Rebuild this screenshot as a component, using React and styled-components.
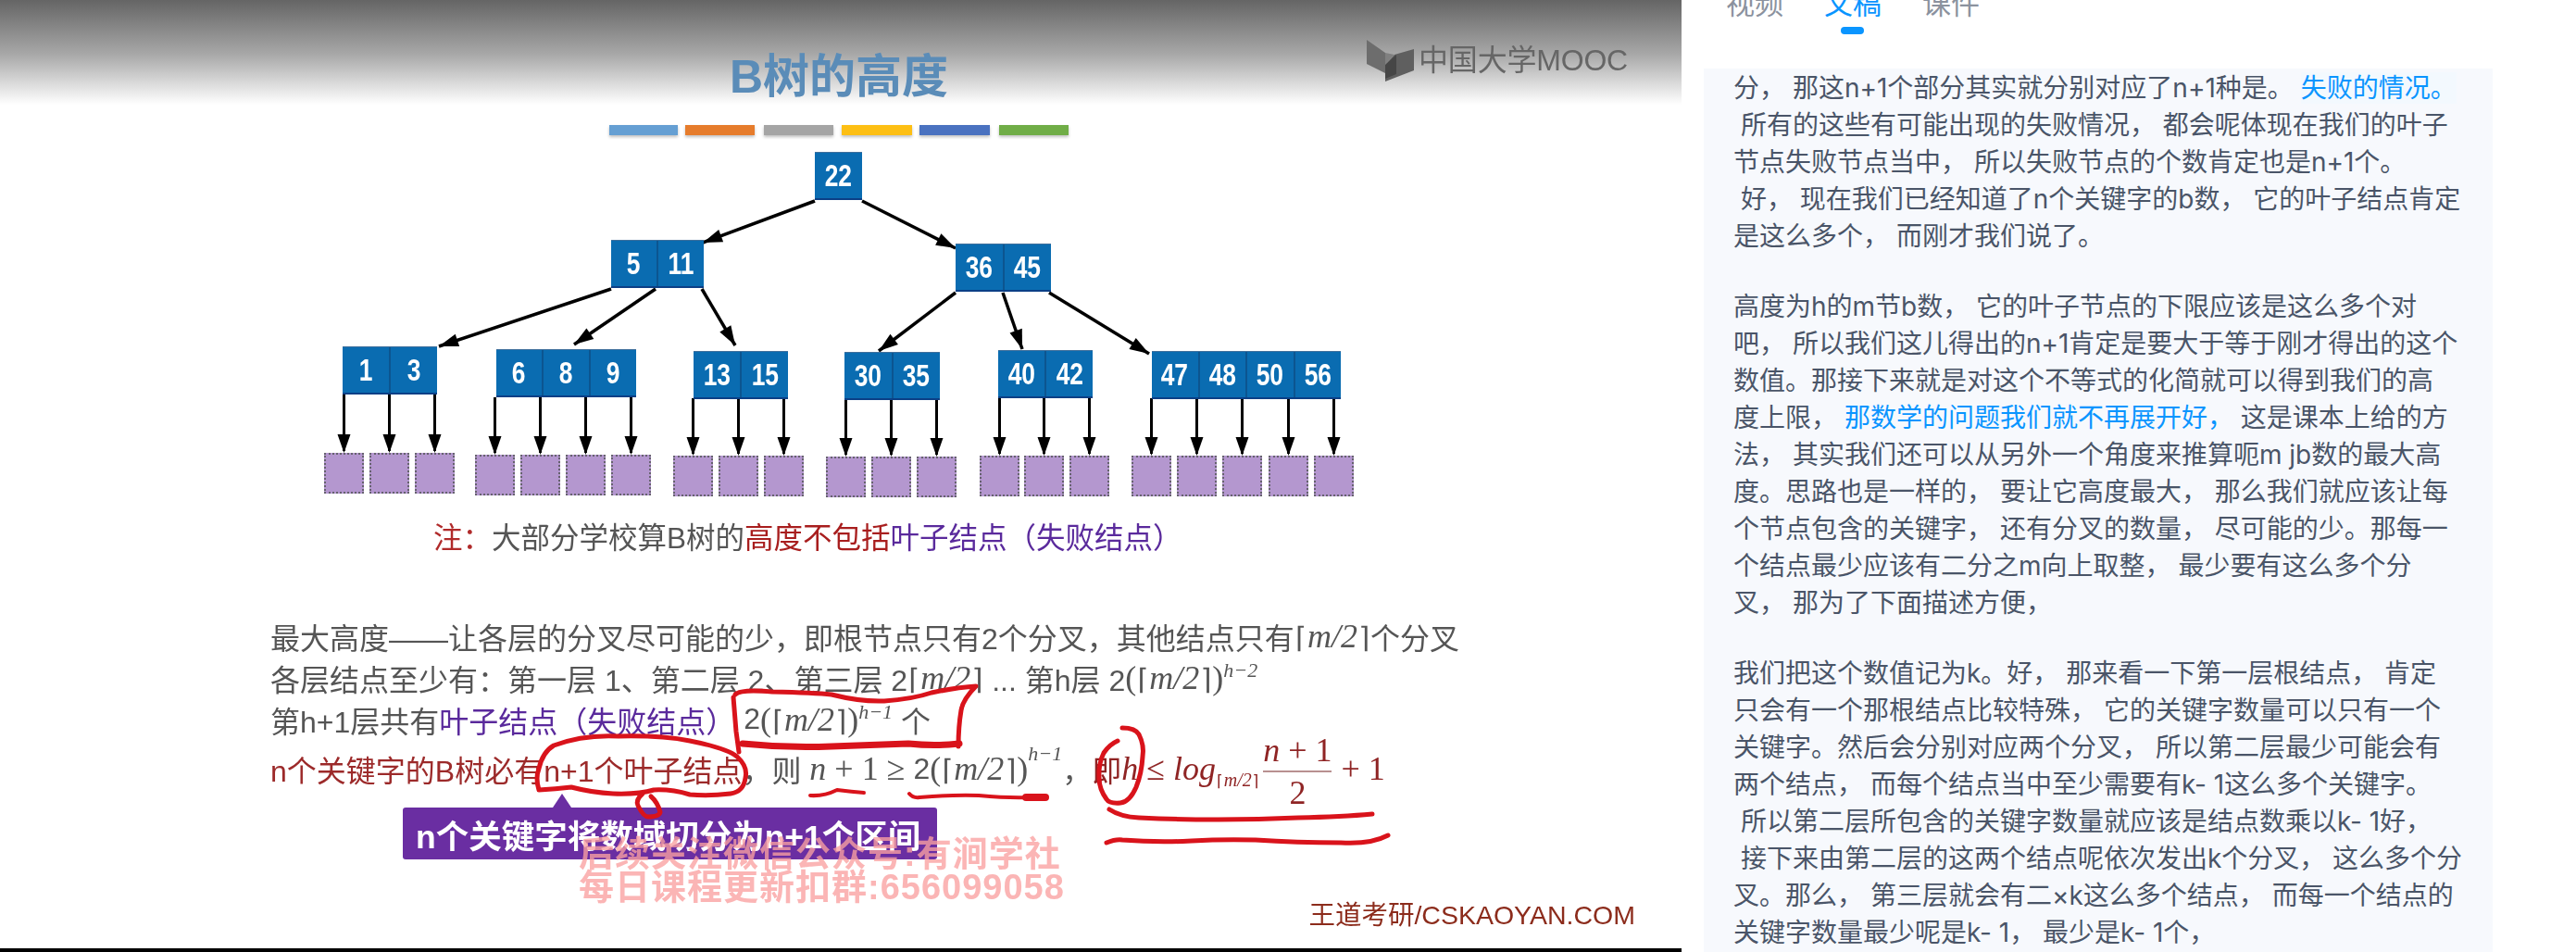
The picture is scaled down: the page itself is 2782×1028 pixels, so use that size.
import React from 'react';
import styled, { createGlobalStyle } from 'styled-components';

const GlobalStyle = createGlobalStyle`
  html, body { margin: 0; padding: 0; background: #fff; }
`;

const SLIDE_FONT = `"Liberation Sans", "Noto Sans CJK SC", sans-serif`;
const MATH_FONT = `"Liberation Serif", "DejaVu Serif", serif`;

const Page = styled.div`
  width: 2782px;
  height: 1028px;
  display: flex;
  overflow: hidden;
  background: #fff;
`;

const Slide = styled.div`
  position: relative;
  width: 1816px;
  height: 1028px;
  flex: none;
  display: flex;
  flex-direction: column;
  overflow: hidden;
  font-family: ${SLIDE_FONT};
  background: #fff;
  filter: blur(0.5px);
`;

const SlideHeader = styled.div`
  height: 113px;
  flex: none;
  box-sizing: border-box;
  padding-top: 52px;
  display: grid;
  grid-template-columns: 1fr auto 1fr;
  background: linear-gradient(#656565, #a8a8a8 52%, #fff);
`;

const Title = styled.h1`
  margin: 0;
  grid-column: 2;
  font-size: 50px;
  line-height: 62px;
  font-weight: 700;
  color: #5a8cb8;
  transform: translateX(-2px);
`;

const Logo = styled.div`
  justify-self: end;
  margin: -9px 58px 0 0;
  height: 46px;
  display: flex;
  align-items: flex-start;
  gap: 4px;
`;

const LogoText = styled.span`
  font-size: 32px;
  line-height: 32px;
  margin-top: 6px;
  color: #666;
  letter-spacing: -0.2px;
`;

const ColorBars = styled.div`
  display: flex;
  margin: 22px 0 0 658px;
  height: 11px;
`;

const ColorBar = styled.div`
  width: ${p => p.$w}px;
  margin-right: ${p => p.$gap}px;
  background: ${p => p.$c};
  box-shadow: 0 2px 3px rgba(0, 0, 0, 0.25);
`;

const Diagram = styled.div`
  position: relative;
  height: 404px;
  flex: none;
  margin-top: 4px;
`;

const ArrowLayer = styled.svg`
  position: absolute;
  left: 0;
  top: 0;
`;

const TreeNode = styled.div`
  position: absolute;
  left: ${p => p.$x}px;
  top: ${p => p.$y}px;
  height: 52px;
  display: flex;
  background: #0a6cb1;
  border-top: 1px solid #3f6f9c;
  border-bottom: 2px solid #0b3f86;
  box-sizing: border-box;
`;

const Cell = styled.div`
  width: ${p => p.$w}px;
  display: flex;
  align-items: center;
  justify-content: center;
  color: #fff;
  & + & { border-left: 2px solid #0c5590; }
`;

const CellLabel = styled.span`
  font-size: 33px;
  font-weight: 700;
  transform: scaleX(0.8);
`;

const Leaf = styled.div`
  position: absolute;
  left: ${p => p.$x}px;
  top: ${p => p.$y}px;
  width: 43px;
  height: 44px;
  box-sizing: border-box;
  background: #b497cf;
  border: 2px dotted #66626e;
`;

const Note = styled.div`
  margin: 4px 0 0 468px;
  font-size: 31.5px;
  line-height: 46px;
  color: #555;
  white-space: nowrap;
`;

const TextBlock = styled.div`
  margin: 60px 0 0 292px;
  font-size: 32px;
  color: #555;
`;

const TextLine = styled.div`
  height: ${p => p.$h || 45}px;
  display: flex;
  align-items: center;
  white-space: pre;
`;

const Mark = styled.span`
  color: ${p => p.$c};
`;

const MathText = styled.span`
  font-family: ${MATH_FONT};
  font-size: 36px;
  color: ${p => p.$c || '#555'};
  font-style: ${p => (p.$plain ? 'normal' : 'italic')};
`;

const CeilBracket = styled.span`
  font-family: "DejaVu Sans", serif;
  font-style: normal;
  font-size: 0.86em;
  margin: 0 1px;
`;

const Paren = styled.span`
  font-style: normal;
`;

const Sup = styled.span`
  font-family: ${MATH_FONT};
  font-size: 22px;
  font-style: italic;
  align-self: flex-start;
  line-height: 30px;
`;

const Sub = styled.span`
  font-family: ${MATH_FONT};
  font-size: 20px;
  font-style: italic;
  color: #8f2424;
  transform: translateY(12px);
`;

const Fraction = styled.span`
  display: inline-flex;
  flex-direction: column;
  align-items: center;
  width: 74px;
  margin: 0 10px 0 4px;
  font-family: ${MATH_FONT};
  font-size: 36px;
  line-height: 44px;
  color: #8f2424;
  transform: translateY(3px);
`;

const FractionBottom = styled.span`
  align-self: stretch;
  text-align: center;
  border-top: 2px solid #b89090;
`;

const Callout = styled.div`
  position: relative;
  width: 577px;
  height: 56px;
  margin: 11px 0 0 435px;
  box-sizing: border-box;
  padding-left: 14px;
  display: flex;
  align-items: center;
  border-radius: 3px;
  background: #6a2ea2;
  color: #fff;
  font-size: 35.5px;
  font-weight: 700;
  white-space: nowrap;
  &::before {
    content: '';
    position: absolute;
    left: 162px;
    top: -15px;
    border-left: 10px solid transparent;
    border-right: 10px solid transparent;
    border-bottom: 15px solid #6a2ea2;
  }
`;

const Watermark = styled.div`
  position: absolute;
  left: 625px;
  top: 904px;
  color: rgba(250, 160, 160, 0.78);
  font-size: 38px;
  line-height: 36px;
  font-weight: 700;
  letter-spacing: 1px;
  white-space: nowrap;
`;

const Credit = styled.div`
  margin: auto 50px 19px auto;
  font-size: 28.5px;
  line-height: 34px;
  color: #8c2c1c;
  white-space: nowrap;
`;

const BlackBar = styled.div`
  height: 4px;
  flex: none;
  background: #000;
`;

const InkLayer = styled.svg`
  position: absolute;
  left: 0;
  top: 0;
  pointer-events: none;
`;

const Side = styled.div`
  flex: 1;
  min-width: 0;
  font-family: Inter, "Noto Sans CJK SC", sans-serif;
`;

const Tabs = styled.div`
  position: relative;
  height: 74px;
  overflow: hidden;
  display: flex;
  gap: 44px;
  padding-left: 48px;
`;

const Tab = styled.div`
  margin-top: -16px;
  height: 46px;
  font-size: 31px;
  line-height: 40px;
  color: ${p => (p.$active ? '#0a95ff' : '#8b929e')};
`;

const TabMark = styled.div`
  position: absolute;
  left: 172px;
  top: 29px;
  width: 25px;
  height: 8px;
  border-radius: 4px;
  background: #0a95ff;
`;

const Panel = styled.div`
  margin-left: 24px;
  width: 852px;
  height: 954px;
  box-sizing: border-box;
  padding: 1px 0 0 32px;
  overflow: hidden;
  background: #f7f9fd;
  font-size: 28px;
  color: #4a5568;
`;

const Paragraph = styled.p`
  margin: 0 0 36px;
`;

const Line = styled.div`
  height: 40px;
  line-height: 40px;
  white-space: pre;
`;

const Highlight = styled.span`
  color: #0a95ff;
  background: ${p => (p.$bg ? '#f3f9fe' : 'transparent')};
`;

const bars = [
  { w: 74, gap: 8, c: '#659fd3' },
  { w: 75, gap: 10, c: '#e67c2c' },
  { w: 75, gap: 9, c: '#a5a5a5' },
  { w: 76, gap: 8, c: '#fdbf14' },
  { w: 76, gap: 10, c: '#4a72c0' },
  { w: 75, gap: 0, c: '#70ad47' },
];

const nodes = [
  { x: 880, y: 164, keys: ['22'], w: 51 },
  { x: 660, y: 259, keys: ['5', '11'], w: 49 },
  { x: 1032, y: 263, keys: ['36', '45'], w: 50.5 },
  { x: 370, y: 374, keys: ['1', '3'], w: 50 },
  { x: 536, y: 377, keys: ['6', '8', '9'], w: 49 },
  { x: 749, y: 379, keys: ['13', '15'], w: 50 },
  { x: 912, y: 380, keys: ['30', '35'], w: 50.5 },
  { x: 1078, y: 378, keys: ['40', '42'], w: 50 },
  { x: 1244, y: 379, keys: ['47', '48', '50', '56'], w: 49.5 },
];

const leafGroups = [
  { y: 489, xs: [350, 399, 448] },
  { y: 491, xs: [513, 562, 611, 660] },
  { y: 492, xs: [727, 776, 825] },
  { y: 493, xs: [892, 941, 990] },
  { y: 492, xs: [1058, 1106, 1155] },
  { y: 492, xs: [1222, 1271, 1320, 1370, 1419] },
];

const nodeBottoms = [426, 429, 430, 432, 429, 430];

const treeArrows = [
  [880, 217, 759, 262],
  [931, 217, 1032, 268],
  [660, 312, 474, 374],
  [708, 312, 620, 372],
  [758, 312, 794, 373],
  [1032, 316, 949, 379],
  [1083, 316, 1104, 377],
  [1133, 316, 1241, 382],
];

const arrowHead = (x1, y1, x2, y2, size = 21, half = 7) => {
  const len = Math.hypot(x2 - x1, y2 - y1);
  const ux = (x2 - x1) / len;
  const uy = (y2 - y1) / len;
  const bx = x2 - ux * size;
  const by = y2 - uy * size;
  return `${x2},${y2} ${bx - uy * half},${by + ux * half} ${bx + uy * half},${by - ux * half}`;
};

const inkStrokes = [
  { w: 5, d: 'M792 753 L795 790 L798 812' },
  { w: 5, d: 'M794 750 Q800 744 834 747 Q880 748 898 750 Q930 758 955 757 Q985 755 1006 748 Q1035 742 1054 741 Q1040 755 1038 767 Q1035 785 1035 806' },
  { w: 7, d: 'M802 803 Q850 808 898 806 Q950 804 981 803 Q1010 806 1036 803' },
  { w: 5, d: 'M582 853 Q578 840 582 830 Q586 812 598 805 Q630 793 668 795 Q715 794 745 800 Q785 808 796 817 Q808 828 805 840 Q803 855 789 857 Q765 860 745 858 Q725 852 706 853 Q690 858 662 857 Q640 856 617 850 Q600 852 582 853' },
  { w: 5, d: 'M694 857 Q686 864 689 870 Q695 882 700 882 Q712 882 713 877 Q710 866 703 860' },
  { w: 4, d: 'M875 859 Q890 860 904 853 Q920 855 933 856' },
  { w: 4, d: 'M982 857 Q986 862 993 861 Q1030 858 1057 859 Q1090 862 1112 861' },
  { w: 8, d: 'M1108 861 L1129 861' },
  { w: 5, d: 'M1212 786 Q1226 786 1230 793 Q1236 805 1234 817 Q1233 835 1227 850 Q1220 866 1210 867 Q1198 868 1195 863 Q1187 852 1187 840 Q1186 825 1192 813 Q1198 804 1207 800' },
  { w: 5, d: 'M1198 874 Q1210 882 1230 883 Q1270 885 1316 885 Q1360 885 1402 883 Q1450 882 1482 879' },
  { w: 5, d: 'M1195 910 Q1205 906 1212 907 Q1250 910 1287 908 Q1320 906 1356 907 Q1400 910 1448 910 Q1480 912 1499 902' },
];

const transcript = [
  [
    ['分， 那这n+1个部分其实就分别对应了n+1种是。 ', { hl: '失败的情况。', bg: true }],
    [' 所有的这些有可能出现的失败情况， 都会呢体现在我们的叶子'],
    ['节点失败节点当中， 所以失败节点的个数肯定也是n+1个。'],
    [' 好， 现在我们已经知道了n个关键字的b数， 它的叶子结点肯定'],
    ['是这么多个， 而刚才我们说了。'],
  ],
  [
    ['高度为h的m节b数， 它的叶子节点的下限应该是这么多个对'],
    ['吧， 所以我们这儿得出的n+1肯定是要大于等于刚才得出的这个'],
    ['数值。那接下来就是对这个不等式的化简就可以得到我们的高'],
    ['度上限， ', { hl: '那数学的问题我们就不再展开好，' }, ' 这是课本上给的方'],
    ['法， 其实我们还可以从另外一个角度来推算呃m jb数的最大高'],
    ['度。思路也是一样的， 要让它高度最大， 那么我们就应该让每'],
    ['个节点包含的关键字， 还有分叉的数量， 尽可能的少。那每一'],
    ['个结点最少应该有二分之m向上取整， 最少要有这么多个分'],
    ['叉， 那为了下面描述方便，'],
  ],
  [
    ['我们把这个数值记为k。好， 那来看一下第一层根结点， 肯定'],
    ['只会有一个那根结点比较特殊， 它的关键字数量可以只有一个'],
    ['关键字。然后会分别对应两个分叉， 所以第二层最少可能会有'],
    ['两个结点， 而每个结点当中至少需要有k- 1这么多个关键字。'],
    [' 所以第二层所包含的关键字数量就应该是结点数乘以k- 1好，'],
    [' 接下来由第二层的这两个结点呢依次发出k个分叉， 这么多个分'],
    ['叉。那么， 第三层就会有二×k这么多个结点， 而每一个结点的'],
    ['关键字数量最少呢是k- 1， 最少是k- 1个，'],
  ],
];

const Ceil = () => (
  <>
    <CeilBracket>⌈</CeilBracket>m/2<CeilBracket>⌉</CeilBracket>
  </>
);

const Power = ({ exp }) => (
  <>
    <MathText>
      <Paren>(</Paren><Ceil /><Paren>)</Paren>
    </MathText>
    <Sup>{exp}</Sup>
  </>
);

const Tree = () => (
  <Diagram>
    <ArrowLayer width="1816" height="404" viewBox="0 150 1816 404">
      {treeArrows.map(([x1, y1, x2, y2]) => (
        <g key={`${x1}-${x2}`}>
          <line x1={x1} y1={y1} x2={x2} y2={y2} stroke="#000" strokeWidth="3.5" />
          <polygon points={arrowHead(x1, y1, x2, y2)} fill="#000" />
        </g>
      ))}
      {leafGroups.map((group, i) =>
        group.xs.map(x => (
          <g key={x}>
            <line x1={x + 21.5} y1={nodeBottoms[i]} x2={x + 21.5} y2={group.y - 2} stroke="#000" strokeWidth="3" />
            <polygon points={arrowHead(x + 21.5, nodeBottoms[i], x + 21.5, group.y, 20, 7)} fill="#000" />
          </g>
        ))
      )}
    </ArrowLayer>
    {nodes.map(n => (
      <TreeNode key={n.keys[0]} $x={n.x} $y={n.y - 150}>
        {n.keys.map(k => (
          <Cell key={k} $w={n.w}><CellLabel>{k}</CellLabel></Cell>
        ))}
      </TreeNode>
    ))}
    {leafGroups.map(group =>
      group.xs.map(x => <Leaf key={x} $x={x} $y={group.y - 150} />)
    )}
  </Diagram>
);

const SlideText = () => (
  <TextBlock>
    <TextLine>
      最大高度——让各层的分叉尽可能的少，即根节点只有2个分叉，其他结点只有
      <MathText><Ceil /></MathText>个分叉
    </TextLine>
    <TextLine>
      各层结点至少有：第一层 1、第二层 2、第三层 2<MathText><Ceil /></MathText> ... 第h层 2
      <Power exp="h−2" />
    </TextLine>
    <TextLine>
      第h+1层共有<Mark $c="#5a2a9c">叶子结点（失败结点）</Mark> 2
      <Power exp="h−1" /> 个
    </TextLine>
    <TextLine $h={62}>
      <Mark $c="#9c2a2a">n个关键字的B树必有n+1个叶子结点</Mark>，则 <MathText>n</MathText>
      <MathText $plain> + 1 ≥ </MathText>2
      <Power exp="h−1" />，
      <Mark $c="#8f2424">即</Mark>
      <MathText $c="#8f2424">h </MathText>
      <MathText $c="#8f2424" $plain>≤ </MathText>
      <MathText $c="#8f2424">log</MathText>
      <Sub><Ceil /></Sub>
      <Fraction>
        <span><i>n</i> + 1</span>
        <FractionBottom>2</FractionBottom>
      </Fraction>
      <MathText $c="#8f2424" $plain>+ 1</MathText>
    </TextLine>
  </TextBlock>
);

export default function App() {
  return (
    <Page>
      <GlobalStyle />
      <Slide>
        <SlideHeader>
          <Title>B树的高度</Title>
          <Logo>
            <svg width="52" height="46" viewBox="0 0 52 46">
              <polygon points="0,0 20,14 20,36 0,26" fill="#6d6d6d" />
              <polygon points="51,10 30,16 20,27 20,45 51,33" fill="#5f5f5f" />
              <polygon points="20,14 30,16 20,27" fill="#808080" />
              <polygon points="32,16 32,37 20,42 20,27" fill="#464646" />
            </svg>
            <LogoText>中国大学MOOC</LogoText>
          </Logo>
        </SlideHeader>
        <ColorBars>
          {bars.map(b => (
            <ColorBar key={b.c} $w={b.w} $gap={b.gap} $c={b.c} />
          ))}
        </ColorBars>
        <Tree />
        <Note>
          <Mark $c="#b02a2a">注：</Mark>大部分学校算B树的<Mark $c="#a81e1e">高度不包括</Mark>
          <Mark $c="#5a2a9c">叶子结点（失败结点）</Mark>
        </Note>
        <SlideText />
        <Callout>n个关键字将数域切分为n+1个区间</Callout>
        <Credit>王道考研/CSKAOYAN.COM</Credit>
        <BlackBar />
        <Watermark>
          后续关注微信公众号:有涧学社
          <br />
          每日课程更新扣群:656099058
        </Watermark>
        <InkLayer width="1816" height="1028" viewBox="0 0 1816 1028">
          {inkStrokes.map(s => (
            <path key={s.d} d={s.d} fill="none" stroke="#d9131b" strokeWidth={s.w} strokeLinecap="round" strokeLinejoin="round" />
          ))}
        </InkLayer>
      </Slide>
      <Side>
        <Tabs>
          <Tab>视频</Tab>
          <Tab $active>文稿</Tab>
          <Tab>课件</Tab>
          <TabMark />
        </Tabs>
        <Panel>
          {transcript.map((para, i) => (
            <Paragraph key={i}>
              {para.map((line, j) => (
                <Line key={j}>
                  {line.map((part, k) =>
                    typeof part === 'string' ? part : <Highlight key={k} $bg={part.bg}>{part.hl}</Highlight>
                  )}
                </Line>
              ))}
            </Paragraph>
          ))}
        </Panel>
      </Side>
    </Page>
  );
}
